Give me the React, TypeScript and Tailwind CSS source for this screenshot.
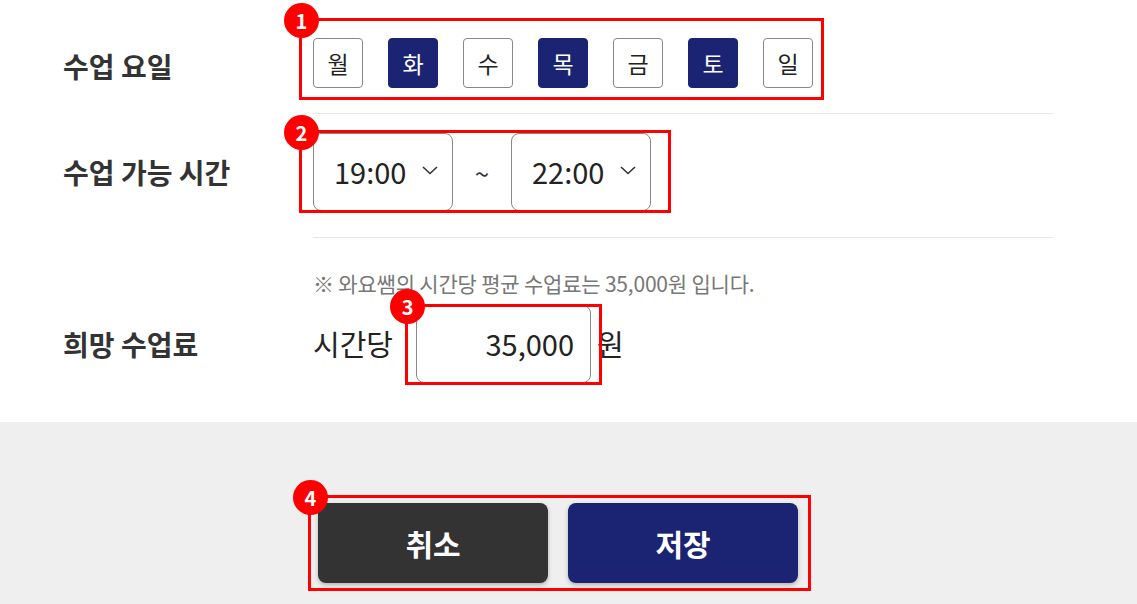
const days = [
  { label: "월", on: false },
  { label: "화", on: true },
  { label: "수", on: false },
  { label: "목", on: true },
  { label: "금", on: false },
  { label: "토", on: true },
  { label: "일", on: false },
];

function Badge({ n }: { n: number }) {
  return (
    <span className="absolute -left-[18px] -top-[18px] flex h-[35px] w-[35px] items-center justify-center rounded-full bg-[#f00] text-[20px] font-bold leading-none text-white">
      {n}
    </span>
  );
}

function Chevron() {
  return (
    <svg width="18" height="11" viewBox="0 0 18 11" className="text-[#333]">
      <polyline points="2,2 9,8.5 16,2" fill="none" stroke="currentColor" strokeWidth="1.6" />
    </svg>
  );
}

function TimeSelect({ value }: { value: string }) {
  return (
    <div className="flex h-[78px] w-[140px] items-center justify-between rounded-[8px] border border-[#888] bg-white pl-[20px] pr-[13px]">
      <span className="text-[29px] text-[#222]">{value}</span>
      <span className="-mt-[3px]">
        <Chevron />
      </span>
    </div>
  );
}

export default function App() {
  return (
    <div className="w-[1137px] bg-white font-['Noto_Sans_CJK_KR','Noto_Sans',sans-serif] text-[#333]">
      <section className="pl-[63px] pr-[84px]">
        {/* 수업 요일 */}
        <div className="flex items-center pt-[38px] pb-[25px]">
          <div className="mt-[6px] w-[250px] text-[28px] font-bold">수업 요일</div>
          <div className="relative flex gap-[25px]">
            <div className="pointer-events-none absolute -top-[20px] -bottom-[12px] -left-[14px] -right-[11px] border-[3px] border-[#f00]">
              <Badge n={1} />
            </div>
            {days.map((d) => (
              <div
                key={d.label}
                className={
                  d.on
                    ? "flex h-[50px] w-[50px] items-center justify-center rounded-[4px] border border-[#1a2472] bg-[#1a2472] text-[23px] text-white"
                    : "flex h-[50px] w-[50px] items-center justify-center rounded-[4px] border border-[#888] bg-white text-[23px] text-[#222]"
                }
              >
                {d.label}
              </div>
            ))}
          </div>
        </div>
        <div className="ml-[250px] h-px bg-[#e8e8e8]" />

        {/* 수업 가능 시간 */}
        <div className="flex items-center pt-[19px] pb-[26px]">
          <div className="w-[250px] text-[28px] font-bold">수업 가능 시간</div>
          <div className="relative flex items-center">
            <div className="pointer-events-none absolute -top-[3px] -bottom-[2px] -left-[14px] -right-[20px] border-[3px] border-[#f00]">
              <Badge n={2} />
            </div>
            <TimeSelect value="19:00" />
            <span className="w-[58px] text-center text-[26px] text-[#333]">~</span>
            <TimeSelect value="22:00" />
          </div>
        </div>
        <div className="ml-[250px] h-px bg-[#e8e8e8]" />

        {/* 희망 수업료 */}
        <div className="flex pt-[32px] pb-[39px]">
          <div className="flex w-[250px] items-end pb-[18px] text-[28px] font-bold">희망 수업료</div>
          <div>
            <p className="text-[21px] leading-[26px] tracking-[-0.2px] text-[#777]">
              ※ 와요쌤의 시간당 평균 수업료는 35,000원 입니다.
            </p>
            <div className="mt-[9px] flex items-center">
              <span className="mr-[23px] text-[29px] text-[#222]">시간당</span>
              <div className="relative">
                <div className="pointer-events-none absolute -top-[1px] -bottom-[2px] -left-[11px] -right-[11px] border-[3px] border-[#f00]">
                  <Badge n={3} />
                </div>
                <div className="flex h-[78px] w-[175px] items-center justify-end rounded-[8px] border border-[#888] pr-[16px] text-[29px] text-[#222]">
                  35,000
                </div>
              </div>
              <span className="ml-[6px] text-[29px] text-[#222]">원</span>
            </div>
          </div>
        </div>
      </section>

      <section className="flex h-[183px] justify-center bg-[#efefef] pt-[81px]">
        <div className="relative ml-[-21px] flex h-[80px] gap-[20px]">
          <div className="pointer-events-none absolute -top-[8px] -bottom-[8px] -left-[10px] -right-[13px] border-[3px] border-[#f00]">
            <Badge n={4} />
          </div>
          <button className="h-[80px] w-[230px] rounded-[8px] bg-[#333] text-[30px] font-bold text-white shadow-[0_2px_4px_rgba(0,0,0,0.25)]">
            취소
          </button>
          <button className="h-[80px] w-[230px] rounded-[8px] bg-[#1a2472] text-[30px] font-bold text-white shadow-[0_2px_4px_rgba(0,0,0,0.25)]">
            저장
          </button>
        </div>
      </section>
    </div>
  );
}
